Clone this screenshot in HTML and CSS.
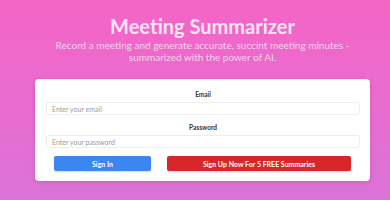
FILE: index.html
```html
<!DOCTYPE html>
<html lang="en">
<head>
    <meta charset="UTF-8">
    <meta name="viewport" content="width=device-width, initial-scale=1.0">
    <title>Meeting Summarizer</title>
    <link rel="stylesheet" href="styles.css">
</head>
<body>

    <main class="page">
        <header class="hero">
            <h1>Meeting Summarizer</h1>
            <p>Record a meeting and generate accurate, succint meeting minutes - summarized with the power of AI.</p>
        </header>

        <form class="card" onsubmit="return false;">
            <label class="field-label" for="email">Email</label>
            <input class="field" type="email" id="email" placeholder="Enter your email">

            <label class="field-label" for="password">Password</label>
            <input class="field" type="password" id="password" placeholder="Enter your password">

            <div class="actions">
                <button class="btn btn-signin" type="submit">Sign In</button>
                <button class="btn btn-signup" type="button">Sign Up Now For 5 FREE Summaries</button>
            </div>
        </form>
    </main>

</body>
</html>
```

FILE: styles.css
```css
/* General Body Styling */
body {
    font-family: Lato, "Open Sans", sans-serif;
    margin: 0;
    height: 200px;
    background: linear-gradient(180deg, #f465c6 0%, #e96cd0 55%, #da74d7 100%);
    overflow: hidden;
}

.page {
    padding: 13px 20px 0 35px;
}

/* Header */
.hero {
    text-align: center;
    margin-bottom: 16px;
}

.hero h1 {
    font-size: 20px;
    font-weight: 700;
    color: #fde4f5;
    margin: 0;
    line-height: 26px;
}

.hero p {
    font-size: 10px;
    line-height: 12px;
    color: #fbd2ef;
    margin: 0 auto;
    max-width: 302px;
}

/* Card */
.card {
    background-color: #fff;
    border-radius: 4px;
    box-shadow: 0 1px 4px rgba(120, 40, 110, 0.25);
    padding: 11px 10px 10px 11px;
    display: flex;
    flex-direction: column;
}

.field-label {
    font-size: 6.5px;
    font-weight: 700;
    color: #333;
    text-align: center;
    line-height: 10px;
    margin-bottom: 2px;
}

.field {
    font-family: inherit;
    font-size: 7px;
    color: #333;
    height: 13px;
    padding: 0 5px;
    border: 1px solid #eee;
    border-radius: 3px;
    margin-bottom: 8px;
    box-sizing: border-box;
    outline: none;
}

.field::placeholder {
    color: #9a9a9a;
}

/* Buttons */
.actions {
    display: flex;
    gap: 16px;
    margin: 0 9px 0 8px;
}

.btn {
    font-family: inherit;
    font-size: 7px;
    font-weight: 700;
    color: #fff;
    height: 15px;
    border: none;
    border-radius: 2px;
    cursor: pointer;
    box-shadow: 0 1px 2px rgba(0, 0, 0, 0.15);
}

.btn-signin {
    width: 97px;
    background-color: #3b86f0;
}

.btn-signup {
    flex: 1;
    background-color: #d8262a;
}
```
